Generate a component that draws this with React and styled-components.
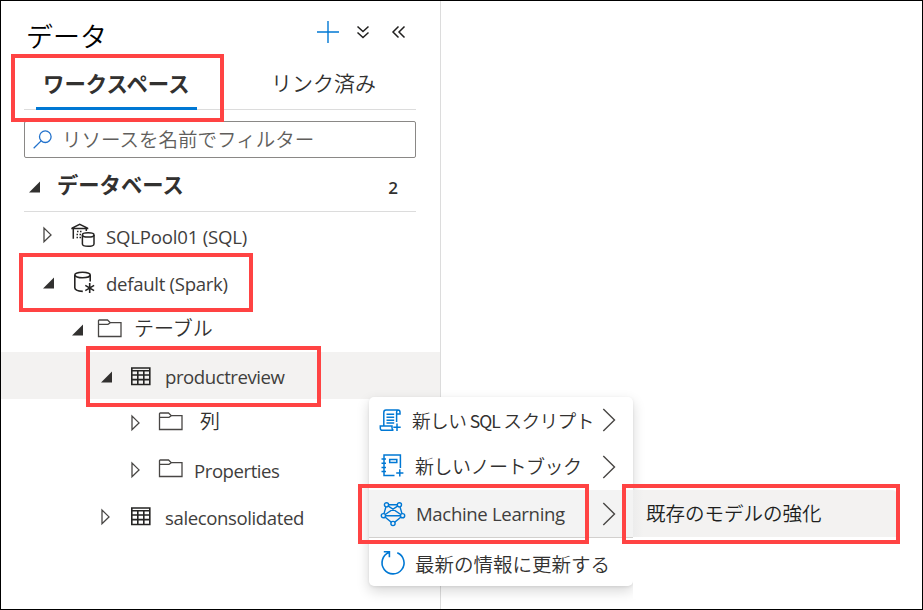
import React from "react";
import styled, { createGlobalStyle } from "styled-components";

const GlobalStyle = createGlobalStyle`
  * { box-sizing: border-box; }
  body { margin: 0; background: #fff; }
  svg { display: block; flex: none; overflow: visible; }
`;

const Frame = styled.div`
  position: relative;
  display: flex;
  width: 923px;
  height: 610px;
  overflow: hidden;
  border: 1px solid #000;
  background: #fff;
  color: #323130;
  font-family: "Open Sans", "Noto Sans CJK JP", sans-serif;
`;

const Panel = styled.aside`
  display: flex;
  flex-direction: column;
  width: 440px;
  height: 608px;
  border-right: 1px solid #dcdcdc;
`;

const Label = styled.span`
  display: block;
  flex: none;
  white-space: pre;
  line-height: 30px;
  font-family: ${(p) => (p.$jp ? '"Noto Sans CJK JP"' : '"Open Sans"')}, "Noto Sans CJK JP", sans-serif;
  font-size: ${(p) => p.$size || 18.6}px;
  font-weight: ${(p) => p.$weight || 400};
  letter-spacing: ${(p) => p.$track || 0}px;
  color: ${(p) => p.$color || (p.$jp ? "inherit" : "#3f3e3d")};
  margin-top: ${(p) => p.$drop || 0}px;
  margin-left: ${(p) => p.$gap || 0}px;
`;

const Latin = styled.span`
  font-size: 17.5px;
  font-weight: 400;
  letter-spacing: -1px;
`;

const Header = styled.header`
  display: flex;
  align-items: center;
  height: 62px;
  padding-left: 25px;
`;

const Actions = styled.div`
  display: flex;
  align-items: center;
  gap: 15px;
  margin-left: auto;
  margin-right: 34px;
`;

const Tabs = styled.nav`
  display: flex;
  height: 47px;
  margin: 0 24px 0 23px;
  border-bottom: 1px solid #dcdcdc;
`;

const Tab = styled.div`
  width: ${(p) => p.$width}px;
  height: 47px;
  margin-left: ${(p) => p.$gap}px;
  padding-left: ${(p) => p.$inset}px;
  padding-top: ${(p) => (p.$active ? 5 : 4)}px;
  border-bottom: 3px solid ${(p) => (p.$active ? "#0078d4" : "transparent")};
`;

const SearchBox = styled.div`
  display: flex;
  align-items: center;
  height: 37px;
  margin: 11px 24px 0 23px;
  padding-left: 8px;
  border: 1px solid #8a8886;
  border-radius: 2px;
`;

const Section = styled.div`
  display: flex;
  align-items: center;
  height: 54px;
  margin: 0 24px 0 23px;
  padding: 0 18px 0 5px;
  border-bottom: 1px solid #dcdcdc;
`;

const Count = styled.span`
  margin-left: auto;
  margin-top: 6px;
  font-size: 17px;
  font-weight: 600;
`;

const TreeRow = styled.div`
  display: flex;
  align-items: center;
  height: ${(p) => p.$height || 47}px;
  padding-left: ${(p) => p.$indent}px;
  background: ${(p) => (p.$selected ? "#f3f2f1" : "transparent")};
`;

const Slot = styled.div`
  display: flex;
  flex: none;
  width: ${(p) => p.$width}px;
  margin-top: ${(p) => p.$drop || 0}px;
`;

const Menu = styled.div`
  position: absolute;
  left: 368px;
  top: 396px;
  width: 264px;
  height: 189px;
  border-radius: 5px;
  background: #fff;
  box-shadow: 0 5px 13px rgba(0, 0, 0, 0.16), 0 1px 3px rgba(0, 0, 0, 0.08);
`;

const MenuItem = styled.div`
  display: flex;
  align-items: center;
  height: ${(p) => p.$height || 47}px;
  padding: 0 17px 0 ${(p) => p.$inset || 12}px;
  background: ${(p) => (p.$active ? "#f3f3f3" : "transparent")};
  border-bottom: ${(p) => (p.$active ? "1px solid #d2d0ce" : "none")};
`;

const Arrow = styled.div`
  margin-left: auto;
`;

const Submenu = styled.div`
  position: absolute;
  left: 632px;
  top: 489px;
  width: 264px;
  height: 109px;
  background: #fff;
`;

const SubmenuItem = styled.div`
  display: flex;
  align-items: center;
  height: 47px;
  padding-left: 13px;
  border-radius: 0 5px 0 0;
  background: linear-gradient(90deg, #ececec, #f3f2f1 10px);
  color: #201f1e;
`;

const Highlight = styled.div`
  position: absolute;
  left: ${(p) => p.$x - 1}px;
  top: ${(p) => p.$y - 1}px;
  width: ${(p) => p.$w}px;
  height: ${(p) => p.$h}px;
  border: 4px solid #ff4343;
  pointer-events: none;
`;

const Opened = () => (
  <svg width="12" height="12"><path d="M0 11.5L11 0.5V11.5Z" fill="#323130" /></svg>
);
const Closed = () => (
  <svg width="9" height="16"><path d="M1 1.1V14.7L8 7.9Z" fill="none" stroke="#484644" strokeWidth="1.3" /></svg>
);
const Folder = () => (
  <svg width="25" height="19" fill="none" stroke="#484644" strokeWidth="1.3">
    <path d="M.5 17.5V1.8Q.5 1 1.3 1H9.5L12.3 3.7H23V17.5ZM.5 5.3H10L12.3 3.7" />
  </svg>
);
const Table = () => (
  <svg width="20" height="19" fill="none" stroke="#252423" strokeWidth="1.6">
    <path d="M.8 1H18.8V17.5H.8ZM.8 3.7H18.8M.8 8H18.8M.8 12.6H18.8M6.8 3.7V17.5M12.8 3.7V17.5" />
  </svg>
);
const SqlPool = () => (
  <svg width="25" height="24" fill="none" stroke="#252423" strokeWidth="1.5">
    <path d="M1 5.2L8.7 1.3L16.6 5.2M.3 5.6H17.3M2.3 5.5V15.7M15.3 5.5V8" />
    <path d="M6 8.4H11.5M5.5 11.4H10M5.5 14.4H10" strokeDasharray="1.5 1.5" />
    <ellipse cx="17.2" cy="11.9" rx="5.8" ry="2.1" />
    <path d="M11.4 11.9V21C11.4 24 23 24 23 21V11.9" />
  </svg>
);
const Spark = () => (
  <svg width="22" height="23" fill="none" stroke="#252423" strokeWidth="1.6">
    <ellipse cx="8.5" cy="4" rx="7.7" ry="2.8" />
    <path d="M.8 4V16.8C.8 19 4.2 20.2 8.8 20.4M16.2 4V10.5" />
    <path d="M15.7 12V22M11.3 14.4L20.1 19.6M20.1 14.4L11.3 19.6" />
  </svg>
);
const Search = () => (
  <svg width="19" height="19" fill="none" stroke="#2272cc" strokeWidth="1.3">
    <circle cx="12.3" cy="6.7" r="5.8" /><path d="M8.1 10.9L.7 18.3" />
  </svg>
);
const Chevron = () => (
  <svg width="13" height="24" fill="none" stroke="#484644" strokeWidth="1.4"><path d="M.3 1L11.5 12L.3 23" /></svg>
);
const Script = () => (
  <svg width="22" height="23" fill="none" stroke="#0078d4" strokeWidth="1.5">
    <path d="M3.8 16.5V3.5C3.8 1.9 4.6 1 6 1H18C19.4 1 20 2 20 3.2V5H16.7M18 1C17 1.2 16.6 2 16.6 3.2V13M.3 17H12V18.7C12 20.3 12.6 21 13.4 21.3H2.4C.9 21.3.3 20.4.3 19ZM6.5 5.2H14.2M6.5 8.2H14.2M6.5 11.2H14.2M6.5 14H14.2M17 14.6V22M13.3 18.3H20.7" />
  </svg>
);
const Notebook = () => (
  <svg width="23" height="24" fill="none" stroke="#0078d4" strokeWidth="1.5">
    <path d="M13.5 21.6H3V1H19.4V14M8.7 5.5H15.8V8.5H8.7ZM.5 5H5M.5 9.2H5M.5 13.4H5M.5 17.6H5M18.8 15.3V22.5M15.2 18.9H22.4" />
  </svg>
);
const Network = () => (
  <svg width="24" height="24" fill="#f3f3f3" stroke="#0078d4" strokeWidth="1.4">
    <path d="M5.5 2.8H18.4L21.6 13.7L12 21.5L2.4 13.7ZM5.5 2.8L21.6 13.7L2.4 13.7L18.4 2.8" fill="none" />
    <circle cx="5.5" cy="2.8" r="2.1" /><circle cx="18.4" cy="2.8" r="2.1" />
    <circle cx="2.4" cy="13.7" r="2.1" /><circle cx="21.6" cy="13.7" r="2.1" /><circle cx="12" cy="21.5" r="2.1" />
  </svg>
);
const Refresh = () => (
  <svg width="24" height="25" fill="none" stroke="#0078d4" strokeWidth="1.6">
    <path d="M16.3 2.7A11 11 0 1 1 8 2.6M2.8 1.7H8.4V7.3" />
  </svg>
);

export default function App() {
  return (
    <>
      <GlobalStyle />
      <Frame>
        <Panel>
          <Header>
            <Label $jp $size={27} $weight={350} $color="#000" $drop={7}>データ</Label>
            <Actions>
              <svg width="22" height="22" stroke="#0078d4" strokeWidth="1.4"><path d="M11 0V22M0 11H22" /></svg>
              <svg width="19" height="14" fill="none" stroke="#201f1e" strokeWidth="1.5"><path d="M3.5 1.5L9 6.5L14.5 1.5M3.5 7.5L9 12.5L14.5 7.5" /></svg>
              <svg width="18" height="14" fill="none" stroke="#201f1e" strokeWidth="1.5"><path d="M10.5 1.5L5 7L10.5 12.5M16.5 1.5L11 7L16.5 12.5" /></svg>
            </Actions>
          </Header>
          <Tabs>
            <Tab $active $gap={12} $width={161} $inset={7}><Label $jp $size={21.4} $weight={700}>ワークスペース</Label></Tab>
            <Tab $gap={51} $width={168} $inset={23}><Label $jp $size={21} $weight={350}>リンク済み</Label></Tab>
          </Tabs>
          <SearchBox>
            <Search />
            <Label $jp $size={19.5} $weight={350} $color="#605e5c" $gap={10} $drop={-2}>リソースを名前でフィルター</Label>
          </SearchBox>
          <Section>
            <Slot $width={28} $drop={4}><Opened /></Slot>
            <Label $jp $size={21.3} $weight={700} $drop={-1}>データベース</Label>
            <Count>2</Count>
          </Section>
          <TreeRow $indent={42} $height={46}>
            <Slot $width={28}><Closed /></Slot>
            <Slot $width={35}><SqlPool /></Slot>
            <Label $drop={4} $track={-0.2}>SQLPool01 (SQL)</Label>
          </TreeRow>
          <TreeRow $indent={42}>
            <Slot $width={31} $drop={3}><Opened /></Slot>
            <Slot $width={32} $drop={2}><Spark /></Slot>
            <Label $drop={4} $track={-0.3}>default (Spark)</Label>
          </TreeRow>
          <TreeRow $indent={71}>
            <Slot $width={26} $drop={2}><Opened /></Slot>
            <Slot $width={36}><Folder /></Slot>
            <Label $jp $size={20} $weight={350} $drop={-1}>テーブル</Label>
          </TreeRow>
          <TreeRow $indent={100} $selected>
            <Slot $width={30} $drop={3}><Opened /></Slot>
            <Slot $width={34} $drop={2}><Table /></Slot>
            <Label $drop={2} $track={-0.45}>productreview</Label>
          </TreeRow>
          <TreeRow $indent={130}>
            <Slot $width={28}><Closed /></Slot>
            <Slot $width={41} $drop={-2}><Folder /></Slot>
            <Label $jp $size={20} $weight={350} $drop={-3}>列</Label>
          </TreeRow>
          <TreeRow $indent={130}>
            <Slot $width={28}><Closed /></Slot>
            <Slot $width={35} $drop={-2}><Folder /></Slot>
            <Label $drop={3} $track={-0.45}>Properties</Label>
          </TreeRow>
          <TreeRow $indent={100}>
            <Slot $width={30}><Closed /></Slot>
            <Slot $width={34}><Table /></Slot>
            <Label $drop={2} $track={-0.4}>saleconsolidated</Label>
          </TreeRow>
        </Panel>
        <Menu>
          <MenuItem $height={46} $inset={11}>
            <Slot $width={32}><Script /></Slot>
            <Label $jp $size={18.7} $weight={350} $track={-0.6}>新しい <Latin>SQL</Latin> スクリプト</Label>
            <Arrow><Chevron /></Arrow>
          </MenuItem>
          <MenuItem>
            <Slot $width={34} $drop={-1}><Notebook /></Slot>
            <Label $jp $size={19} $weight={350} $track={-0.5} $drop={-2}>新しいノートブック</Label>
            <Arrow><Chevron /></Arrow>
          </MenuItem>
          <MenuItem $active $height={48}>
            <Slot $width={35}><Network /></Slot>
            <Label $drop={1} $track={-0.35}>Machine Learning</Label>
            <Arrow><Chevron /></Arrow>
          </MenuItem>
          <MenuItem $height={48}>
            <Slot $width={34}><Refresh /></Slot>
            <Label $jp $size={19.5} $weight={350} $drop={3}>最新の情報に更新する</Label>
          </MenuItem>
        </Menu>
        <Submenu>
          <SubmenuItem><Label $jp $size={19.5} $weight={350} $drop={-2}>既存のモデルの強化</Label></SubmenuItem>
        </Submenu>
        <Highlight $x={11} $y={54} $w={213} $h={68} />
        <Highlight $x={19} $y={253} $w={234} $h={59} />
        <Highlight $x={86} $y={346} $w={235} $h={61} />
        <Highlight $x={358} $y={484} $w={231} $h={60} />
        <Highlight $x={622} $y={484} $w={278} $h={60} />
      </Frame>
    </>
  );
}
